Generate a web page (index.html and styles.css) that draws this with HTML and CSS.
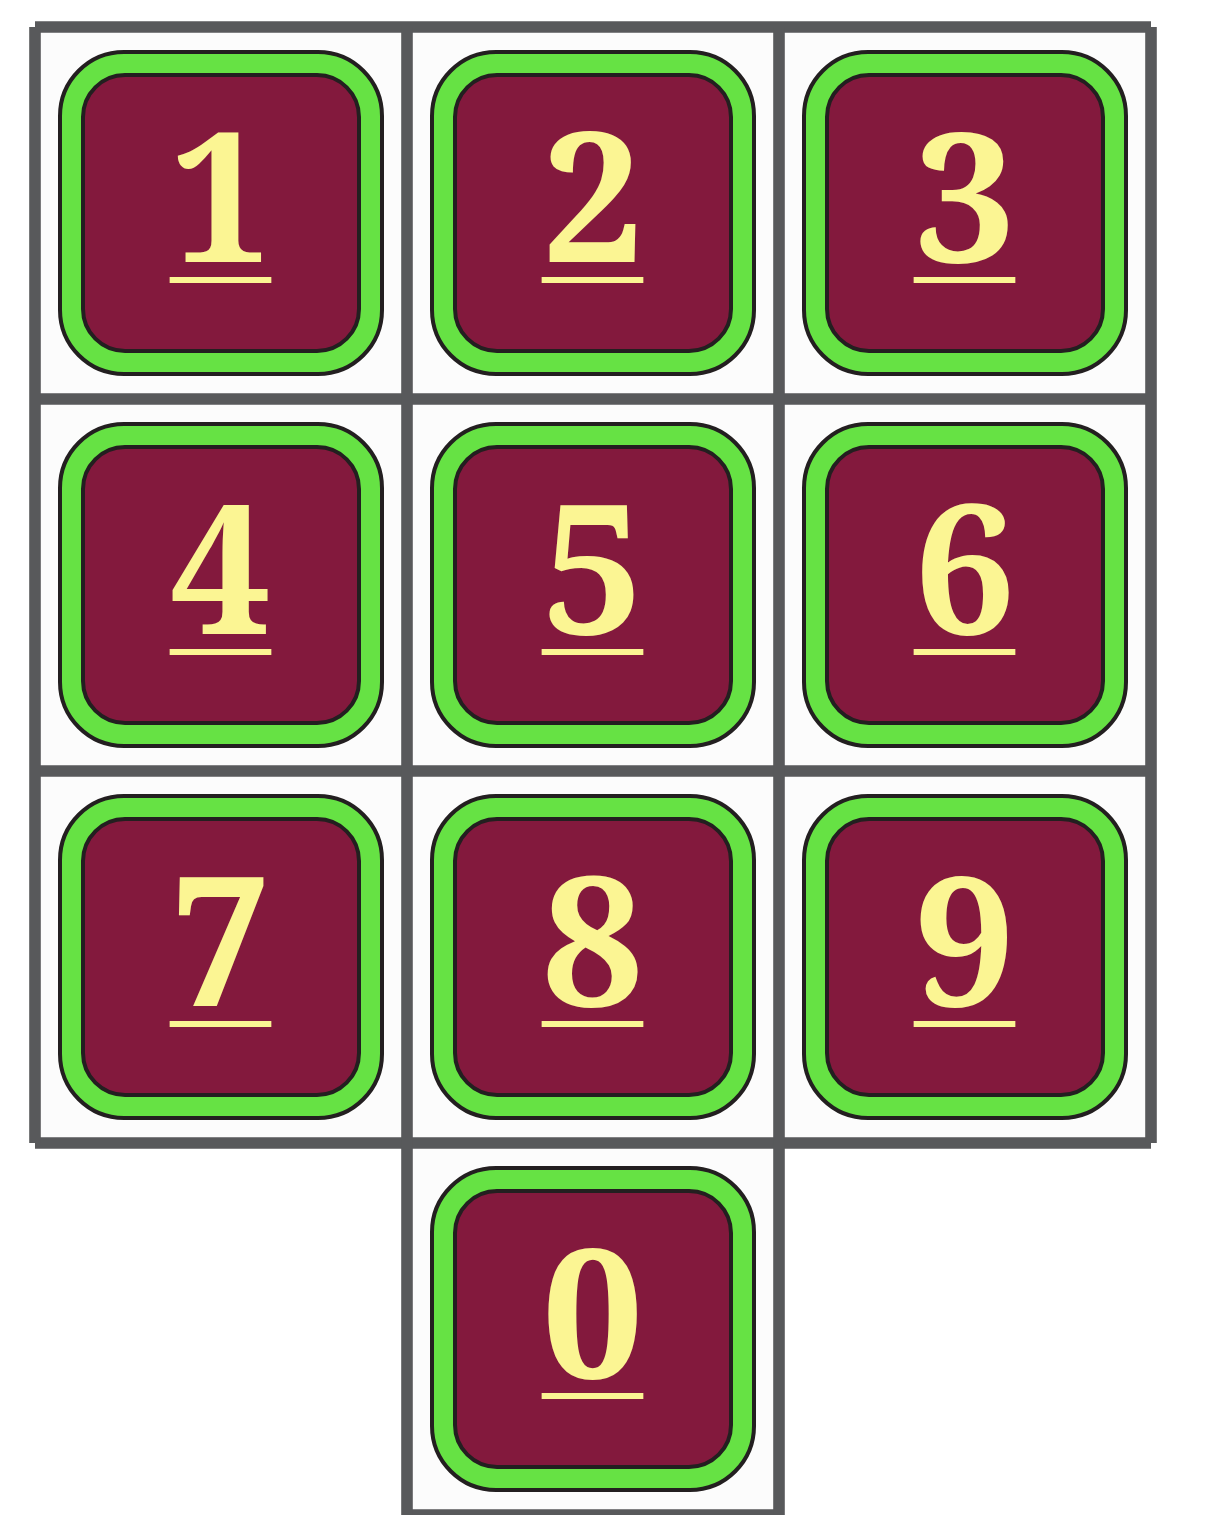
FILE: index.html
```html
<!DOCTYPE html>
<html lang="en">
<head>
<meta charset="utf-8">
<title>Keypad</title>
<link rel="stylesheet" href="styles.css">
</head>
<body>
<div class="keypad">
  <svg class="lines" width="1128" height="1500" viewBox="0 0 1128 1500" aria-hidden="true">
    <g transform="translate(6 6)" stroke="#58595b" stroke-width="11.6" stroke-linecap="butt" fill="none">
      <line x1="0" y1="0" x2="1116" y2="0"/>
      <line x1="0" y1="372" x2="1116" y2="372"/>
      <line x1="0" y1="744" x2="1116" y2="744"/>
      <line x1="0" y1="1116" x2="1116" y2="1116"/>
      <line x1="372" y1="1488" x2="744" y2="1488"/>
      <line x1="0" y1="0" x2="0" y2="1116"/>
      <line x1="372" y1="0" x2="372" y2="1488"/>
      <line x1="744" y1="0" x2="744" y2="1488"/>
      <line x1="1116" y1="0" x2="1116" y2="1116"/>
    </g>
  </svg>
  <div class="cell"><button class="key"><span class="face"><span class="digit">1</span></span></button></div>
  <div class="cell"><button class="key"><span class="face"><span class="digit">2</span></span></button></div>
  <div class="cell"><button class="key"><span class="face"><span class="digit">3</span></span></button></div>
  <div class="cell"><button class="key"><span class="face"><span class="digit">4</span></span></button></div>
  <div class="cell"><button class="key"><span class="face"><span class="digit">5</span></span></button></div>
  <div class="cell"><button class="key"><span class="face"><span class="digit">6</span></span></button></div>
  <div class="cell"><button class="key"><span class="face"><span class="digit">7</span></span></button></div>
  <div class="cell"><button class="key"><span class="face"><span class="digit">8</span></span></button></div>
  <div class="cell"><button class="key"><span class="face"><span class="digit">9</span></span></button></div>
  <div class="cell cell-zero"><button class="key"><span class="face"><span class="digit">0</span></span></button></div>
</div>
</body>
</html>
```
FILE: styles.css
```css
html, body {
  margin: 0;
  padding: 0;
  background: #ffffff;
}

.keypad {
  position: relative;
  margin: 26.5px 0 0 34.5px;
  width: 1116px;
  display: grid;
  grid-template-columns: repeat(3, 372px);
  grid-auto-rows: 372px;
}

.lines {
  position: absolute;
  left: -6px;
  top: -6px;
  z-index: 1;
  pointer-events: none;
}

.cell {
  background: #fcfcfc;
  display: flex;
  align-items: center;
  justify-content: center;
}

.cell-zero {
  grid-column: 2;
}

.key {
  box-sizing: border-box;
  width: 326px;
  height: 326px;
  margin: 0;
  padding: 19px;
  border: 4.8px solid #231f20;
  border-radius: 66px;
  background: #66e244;
  display: flex;
  cursor: pointer;
  font: inherit;
}

.face {
  box-sizing: border-box;
  flex: 1;
  border: 4.8px solid #231f20;
  border-radius: 44px;
  background: #83193d;
  display: flex;
  align-items: center;
  justify-content: center;
  padding-bottom: 40px;
}

.digit {
  font-family: "Noto Serif", "DejaVu Serif", serif;
  font-weight: 700;
  font-size: 180px;
  line-height: 1;
  color: #fbf593;
  text-decoration: underline;
  text-decoration-thickness: 6px;
  text-underline-offset: 15px;
}
```
